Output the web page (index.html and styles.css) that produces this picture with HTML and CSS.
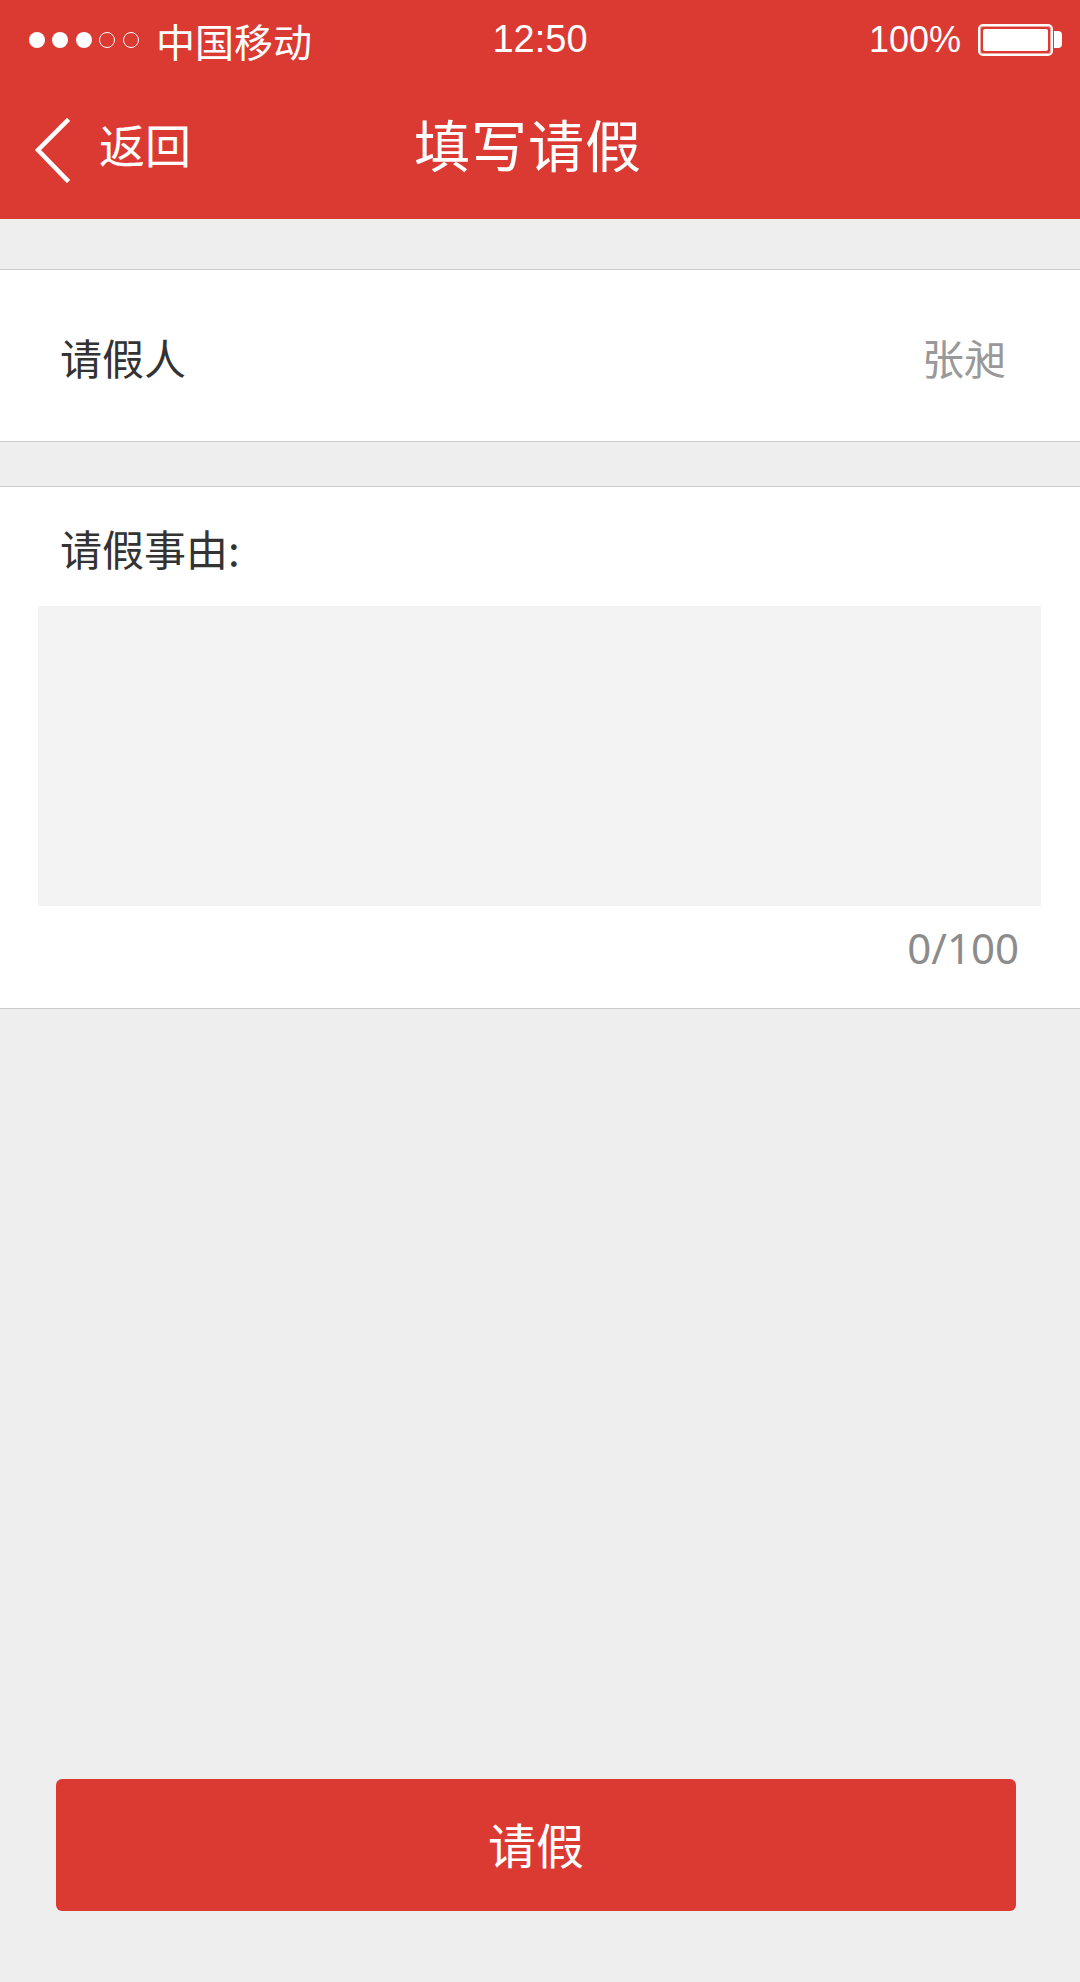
FILE: index.html
```html
<!DOCTYPE html>
<html lang="zh-CN">
<head>
<meta charset="utf-8">
<title>填写请假</title>
<link rel="stylesheet" href="styles.css">
</head>
<body>
<header class="header">
  <div class="statusbar">
    <div class="sb-left">
      <span class="dot"></span><span class="dot"></span><span class="dot"></span><span class="dot hollow"></span><span class="dot hollow"></span>
      <span class="carrier">中国移动</span>
    </div>
    <div class="sb-time">12:50</div>
    <div class="sb-right">
      <span class="pct">100%</span>
      <span class="battery"><span class="battery-fill"></span></span>
      <span class="battery-nub"></span>
    </div>
  </div>
  <nav class="navbar">
    <div class="back">
      <svg class="chevron" width="40" height="72" viewBox="0 0 40 72">
        <polyline points="34,10 5,39 34,69" fill="none" stroke="#fff" stroke-width="4.5" stroke-linecap="square" stroke-linejoin="miter"/>
      </svg>
      <span class="back-text">返回</span>
    </div>
    <h1 class="title">填写请假</h1>
    <div class="nav-spacer"></div>
  </nav>
</header>

<main class="content">
  <section class="card row">
    <span class="row-label">请假人</span>
    <span class="row-value">张昶</span>
  </section>

  <section class="card reason">
    <div class="reason-label">请假事由:</div>
    <div class="textarea"></div>
    <div class="counter">0/100</div>
  </section>

  <div class="actions">
    <button class="submit">请假</button>
  </div>
</main>
</body>
</html>
```

FILE: styles.css
```css
html, body {
  margin: 0;
  padding: 0;
}
body {
  width: 1080px;
  height: 1982px;
  background: #eeeeee;
  font-family: "Noto Sans CJK SC", "Noto Sans", sans-serif;
  overflow: hidden;
}

.header {
  background: #db3a33;
  color: #fff;
  height: 219px;
}

.statusbar {
  height: 77px;
  display: grid;
  grid-template-columns: 1fr auto 1fr;
  align-items: center;
  padding: 0 18px 0 29px;
}
.sb-left {
  display: flex;
  align-items: center;
}
.dot {
  width: 16px;
  height: 16px;
  border-radius: 50%;
  background: #fff;
  margin-right: 7.4px;
  box-sizing: border-box;
}
.dot.hollow {
  background: transparent;
  border: 1.5px solid #fff;
}
.carrier {
  margin-left: 10px;
  font-family: "Noto Sans CJK SC", sans-serif;
  font-size: 39px;
  line-height: 77px;
  margin-top: 2px;
}
.sb-time {
  font-family: "Liberation Sans", Arial, sans-serif;
  font-size: 38px;
  line-height: 77px;
  margin-right: 11px;
}
.sb-right {
  display: flex;
  align-items: center;
  justify-content: flex-end;
}
.pct {
  font-family: "Liberation Sans", Arial, sans-serif;
  font-size: 36px;
  line-height: 77px;
  margin-right: 17px;
}
.battery {
  width: 75px;
  height: 32px;
  box-sizing: border-box;
  border: 2px solid #fff;
  box-shadow: inset 0 0 0 1px #f2a6a2;
  border-radius: 5px;
  padding: 3px;
  display: flex;
}
.battery-fill {
  flex: 1;
  background: #fff;
  border-radius: 2px;
}
.battery-nub {
  width: 8px;
  height: 17px;
  background: #fff;
  border-radius: 0 4px 4px 0;
  margin-left: 1px;
}

.navbar {
  height: 142px;
  box-sizing: border-box;
  display: grid;
  grid-template-columns: 1fr auto 1fr;
  align-items: center;
  padding: 0 24px 10px 0;
}
.back {
  display: flex;
  align-items: center;
  padding-left: 33px;
}
.chevron {
  display: block;
  margin-top: 8px;
}
.back-text {
  font-size: 46px;
  line-height: 46px;
  margin-left: 26px;
}
.title {
  margin: 0;
  font-weight: normal;
  font-size: 56px;
  line-height: 56px;
  letter-spacing: 1px;
}

.content {
  padding-top: 50px;
}
.card {
  background: #fff;
  border-top: 1px solid #cccccc;
  border-bottom: 1px solid #cccccc;
}
.row {
  height: 171px;
  box-sizing: content-box;
  display: flex;
  justify-content: space-between;
  align-items: flex-start;
  padding: 0 74px 0 60px;
}
.row-label, .row-value {
  font-size: 42px;
  line-height: 42px;
  margin-top: 66px;
}
.row-label {
  color: #333;
}
.row-value {
  color: #999;
}

.reason {
  margin-top: 44px;
  padding: 40px 0 38px;
}
.reason-label {
  font-size: 42px;
  line-height: 42px;
  color: #333;
  padding-left: 60px;
}
.textarea {
  margin: 37px 39px 0 38px;
  height: 300px;
  background: #f3f3f3;
}
.counter {
  margin-top: 21px;
  text-align: right;
  padding-right: 61px;
  font-family: "Noto Sans", "Open Sans", sans-serif;
  font-size: 42px;
  line-height: 42px;
  color: #8c8c8c;
  padding-bottom: 1px;
}

.actions {
  padding: 0 64px 0 56px;
  margin-top: 770px;
}
.submit {
  display: flex;
  width: 100%;
  height: 132px;
  align-items: center;
  justify-content: center;
  padding: 0 0 5px;
  border: none;
  border-radius: 6px;
  background: #db3a33;
  color: #fff;
  font-family: "Noto Sans CJK SC", sans-serif;
  font-size: 48px;
  line-height: 48px;
}
```
